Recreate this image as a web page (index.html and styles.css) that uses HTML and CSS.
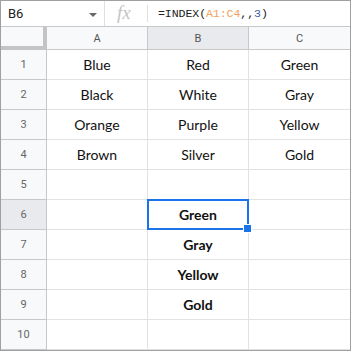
FILE: index.html
```html
<!DOCTYPE html>
<html lang="en">
<head>
    <meta charset="UTF-8">
    <meta name="viewport" content="width=device-width, initial-scale=1.0">
    <title>INDEX</title>
    <link rel="stylesheet" href="styles.css">
</head>
<body>
    <div class="sheet">
        <!-- name box + formula -->
        <div class="bar">
            <div class="namebox">
                <span class="ref">B6</span>
                <span class="arrow"></span>
            </div>
            <div class="fx">fx</div>
            <div class="formula">=INDEX(<span class="range">A1:C4</span>,,<span class="num">3</span>)</div>
        </div>

        <div class="grid">
            <div class="corner"></div>
            <div class="colhead">A</div>
            <div class="colhead active">B</div>
            <div class="colhead last">C</div>

            <div class="rowhead">1</div>
            <div class="cell">Blue</div>
            <div class="cell">Red</div>
            <div class="cell last">Green</div>

            <div class="rowhead">2</div>
            <div class="cell">Black</div>
            <div class="cell">White</div>
            <div class="cell last">Gray</div>

            <div class="rowhead">3</div>
            <div class="cell">Orange</div>
            <div class="cell">Purple</div>
            <div class="cell last">Yellow</div>

            <div class="rowhead">4</div>
            <div class="cell">Brown</div>
            <div class="cell">Silver</div>
            <div class="cell last">Gold</div>

            <div class="rowhead">5</div>
            <div class="cell"></div>
            <div class="cell"></div>
            <div class="cell last"></div>

            <div class="rowhead active">6</div>
            <div class="cell"></div>
            <div class="cell bold selected">Green</div>
            <div class="cell last"></div>

            <div class="rowhead">7</div>
            <div class="cell"></div>
            <div class="cell bold">Gray</div>
            <div class="cell last"></div>

            <div class="rowhead">8</div>
            <div class="cell"></div>
            <div class="cell bold">Yellow</div>
            <div class="cell last"></div>

            <div class="rowhead">9</div>
            <div class="cell"></div>
            <div class="cell bold">Gold</div>
            <div class="cell last"></div>

            <div class="rowhead">10</div>
            <div class="cell"></div>
            <div class="cell"></div>
            <div class="cell last"></div>
        </div>
    </div>
</body>
</html>
```

FILE: styles.css
```css
*{
    padding: 0;
    margin: 0;
    box-sizing: border-box;
}
body{
    background: white;
    font-family: Lato, 'Open Sans', sans-serif;
}
.sheet{
    width: 351px;
    height: 351px;
    border: 1px solid #a0a0a0;
    background: white;
}
.bar{
    height: 26px;
    display: flex;
    align-items: center;
    border-bottom: 1px solid #c8c8c8;
}
.namebox{
    width: 104px;
    height: 100%;
    display: flex;
    align-items: center;
    justify-content: space-between;
    padding: 0 7px 0 7px;
    border-right: 1px solid #e0e0e0;
}
.ref{
    font-family: Roboto, sans-serif;
    font-size: 13px;
    color: #222;
}
.arrow{
    width: 0;
    height: 0;
    border-left: 4px solid transparent;
    border-right: 4px solid transparent;
    border-top: 4px solid #666;
    margin-top: 2px;
}
.fx{
    width: 43px;
    height: 17px;
    border-right: 1px solid #e0e0e0;
    padding-left: 12px;
    font-family: 'Liberation Serif', serif;
    font-style: italic;
    font-size: 19px;
    line-height: 16px;
    color: #c4c4c4;
}
.formula{
    padding-left: 10px;
    font-family: 'Liberation Mono', monospace;
    font-size: 11.6px;
    color: #222;
    letter-spacing: -0.1px;
}
.range{
    color: #f2a25c;
}
.num{
    color: #3f5aa6;
}
.grid{
    display: grid;
    grid-template-columns: 46px 101px 101px 101px;
    grid-template-rows: 23px repeat(10, 30px);
}
.grid > div{
    display: flex;
    align-items: center;
    justify-content: center;
    border-right: 1px solid #e2e2e2;
    border-bottom: 1px solid #e2e2e2;
}
.grid > .last{
    border-right: none;
}
.corner{
    background: #f8f9fa;
    border-right: 4px solid #c4c4c4 !important;
    border-bottom: 4px solid #c4c4c4 !important;
}
.colhead{
    background: #f8f9fa;
    font-family: Roboto, sans-serif;
    font-size: 11px;
    color: #555;
    border-right-color: #c8c8c8 !important;
    border-bottom-color: #c8c8c8 !important;
}
.rowhead{
    background: #f8f9fa;
    font-family: Roboto, sans-serif;
    font-size: 11px;
    color: #666;
    border-right-color: #c8c8c8 !important;
    border-bottom-color: #c8c8c8 !important;
}
.colhead.active,
.rowhead.active{
    background: #e8eaed;
}
.cell{
    font-size: 14px;
    color: #111;
}
.bold{
    font-weight: 700;
}
.selected{
    position: relative;
}
.selected::after{
    content: "";
    position: absolute;
    left: -1px;
    top: -1px;
    right: -1px;
    bottom: -1px;
    border: 2px solid #1a73e8;
}
.selected::before{
    content: "";
    position: absolute;
    right: -4px;
    bottom: -4px;
    width: 7px;
    height: 7px;
    background: #1a73e8;
    border: 1px solid white;
    z-index: 1;
}
```
